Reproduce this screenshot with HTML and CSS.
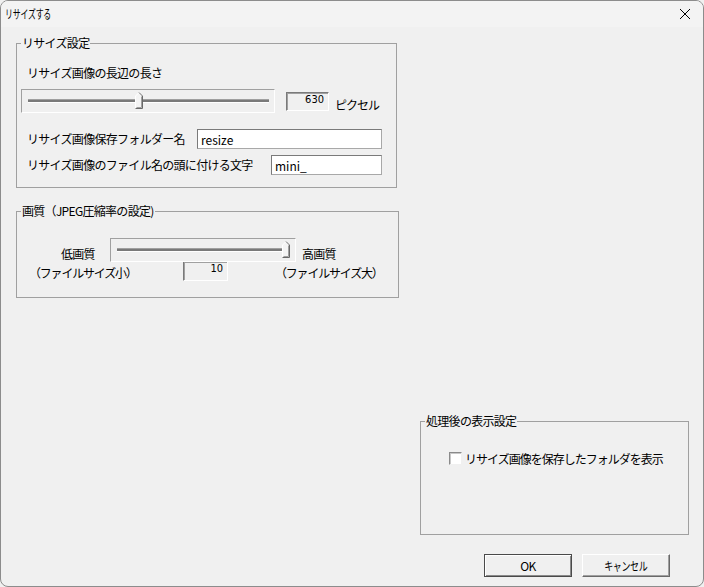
FILE: index.html
```html
<!DOCTYPE html>
<html lang="ja">
<head>
    <meta charset="UTF-8">
    <title>リサイズする</title>
    <link rel="stylesheet" href="styles.css">
</head>
<body>
    <div class="window">
        <div class="titlebar">
            <span class="title">リサイズする</span>
            <svg class="close" width="12" height="12" viewBox="0 0 12 12">
                <path d="M1 1 L11 11 M11 1 L1 11" stroke="#000" stroke-width="1" fill="none"/>
            </svg>
        </div>

        <div class="content">
            <!-- resize settings -->
            <fieldset class="group group-resize">
                <legend>リサイズ設定</legend>
                <div class="head-label">リサイズ画像の長辺の長さ</div>
                <div class="slider-row">
                    <div class="slider slider-long">
                        <div class="track"></div>
                        <svg class="thumb" style="left: 113px;" width="8" height="17" viewBox="0 0 8 17">
                            <path d="M0.5 16.5 V4 L4 0.5 L7.5 4 V16.5 Z" fill="#f4f4f4" stroke="#fff"/>
                            <path d="M4 0.5 L7.5 4 V16.5 H0.5" fill="none" stroke="#696969"/>
                            <path d="M6.5 4.5 V15.5 H1.5" fill="none" stroke="#a0a0a0"/>
                        </svg>
                    </div>
                    <div class="num num-long">630</div>
                    <span class="unit">ピクセル</span>
                </div>
                <div class="field-row first">
                    <label class="lbl-folder">リサイズ画像保存フォルダー名</label>
                    <input class="text in-folder" type="text" value="resize">
                </div>
                <div class="field-row">
                    <label class="lbl-prefix">リサイズ画像のファイル名の頭に付ける文字</label>
                    <input class="text in-prefix" type="text" value="mini_">
                </div>
            </fieldset>

            <!-- jpeg quality -->
            <fieldset class="group group-quality">
                <legend>画質（JPEG圧縮率の設定)</legend>
                <div class="quality-row">
                    <span class="low">低画質</span>
                    <div class="slider slider-quality">
                        <div class="track"></div>
                        <svg class="thumb" style="left: 171px;" width="8" height="17" viewBox="0 0 8 17">
                            <path d="M0.5 16.5 V4 L4 0.5 L7.5 4 V16.5 Z" fill="#f4f4f4" stroke="#fff"/>
                            <path d="M4 0.5 L7.5 4 V16.5 H0.5" fill="none" stroke="#696969"/>
                            <path d="M6.5 4.5 V15.5 H1.5" fill="none" stroke="#a0a0a0"/>
                        </svg>
                    </div>
                    <span class="high">高画質</span>
                </div>
                <div class="size-row">
                    <span class="small">（ファイルサイズ小）</span>
                    <div class="num num-quality">10</div>
                    <span class="large">（ファイルサイズ大）</span>
                </div>
            </fieldset>

            <!-- after processing -->
            <fieldset class="group group-after">
                <legend>処理後の表示設定</legend>
                <label class="check-row">
                    <span class="checkbox"></span>
                    <span class="check-text">リサイズ画像を保存したフォルダを表示</span>
                </label>
            </fieldset>

            <div class="buttons">
                <button class="btn btn-default">OK</button>
                <button class="btn"><span class="btn-narrow">キャンセル</span></button>
            </div>
        </div>
    </div>
</body>
</html>
```

FILE: styles.css
```css
* {
    box-sizing: border-box;
}

body {
    margin: 0;
    background-color: #f0f0f0;
    font-family: "Noto Sans CJK JP", "Noto Sans", sans-serif;
    font-size: 12px;
    line-height: 14px;
    letter-spacing: -0.7px;
    color: #000;
}

.window {
    width: 704px;
    height: 587px;
    border: 1px solid #8c8c8c;
    border-radius: 8px;
    overflow: hidden;
    background-color: #f0f0f0;
}

.titlebar {
    height: 26px;
    background-color: #f3f3f3;
    display: flex;
    align-items: center;
    justify-content: space-between;
    padding: 0 12px 0 4px;
}

.title {
    display: inline-block;
    transform: scaleX(0.66);
    transform-origin: left center;
    letter-spacing: -0.3px;
}

.close {
    display: block;
}

.content {
    padding-left: 15px;
}

/* group boxes */
.group {
    margin: 0;
    border: 1px solid #a0a0a0;
    padding: 0 0 0 4px;
    min-width: 0;
}

.group legend {
    padding: 0 1px;
    line-height: 14px;
}

.group-resize {
    margin-top: 9px;
    width: 381px;
    height: 152px;
}

.group-quality {
    margin-top: 16px;
    width: 383px;
    height: 94px;
}

.group-after {
    margin-top: 116px;
    margin-left: 404px;
    width: 269px;
    height: 121px;
}

.head-label {
    margin-top: 16px;
    margin-left: 6px;
}

/* sliders */
.slider-row {
    display: flex;
    align-items: flex-start;
    margin-top: 9px;
    height: 24px;
}

.slider {
    position: relative;
    height: 24px;
    border: 1px solid;
    border-color: #a0a0a0 #fff #fff #a0a0a0;
}

.slider-long {
    width: 254px;
}

.slider-quality {
    width: 186px;
}

.track {
    position: absolute;
    left: 6px;
    right: 5px;
    top: 9px;
    height: 4px;
    border-top: 1px solid #a0a0a0;
    border-bottom: 1px solid #fff;
    background-color: #7a7a7a;
}

.thumb {
    position: absolute;
    top: 2px;
    display: block;
}

.num {
    height: 19px;
    border: 1px solid;
    border-color: #7a7a7a #fff #fff #7a7a7a;
    box-shadow: inset 1px 1px 0 #a0a0a0;
    text-align: right;
    padding-right: 4px;
    font-family: "DejaVu Sans Condensed", "Liberation Sans", sans-serif;
    font-size: 11px;
    line-height: 14px;
    letter-spacing: 0;
}

.num-long {
    width: 43px;
    margin-top: 3px;
    margin-left: 11px;
}

.unit {
    margin-top: 9px;
    margin-left: 6px;
    letter-spacing: -1px;
}

/* text fields */
.field-row {
    display: flex;
    align-items: center;
    padding-left: 6px;
    margin-top: 6px;
    height: 20px;
}

.field-row.first {
    margin-top: 16px;
}

.lbl-folder {
    width: 170px;
}

.lbl-prefix {
    width: 244px;
}

.text {
    height: 20px;
    border: 1px solid;
    border-color: #7a7a7a #a8a8a8 #a8a8a8 #7a7a7a;
    background-color: #fff;
    font-family: "Noto Sans CJK JP", "Noto Sans", sans-serif;
    font-size: 12px;
    letter-spacing: 0;
    padding: 0 3px;
    margin: 0;
    outline: none;
}

.in-folder {
    width: 185px;
}

.in-prefix {
    width: 111px;
}

/* quality */
.quality-row {
    display: flex;
    align-items: center;
    margin-top: 20px;
    height: 24px;
}

.low {
    margin-left: 40px;
    margin-top: 8px;
    width: 49px;
}

.high {
    margin-left: 6px;
    margin-top: 8px;
}

.size-row {
    display: flex;
    align-items: center;
    margin-top: -1px;
    height: 20px;
}

.small {
    margin-left: 8px;
    width: 154px;
    margin-top: 3px;
    letter-spacing: -1.2px;
}

.num-quality {
    width: 45px;
    height: 20px;
}

.large {
    margin-left: 47px;
    margin-top: 3px;
    letter-spacing: -1.2px;
}

/* checkbox */
.check-row {
    display: flex;
    align-items: center;
    margin-top: 24px;
    margin-left: 24px;
    height: 13px;
}

.checkbox {
    width: 13px;
    height: 13px;
    background-color: #fff;
    border: 1px solid;
    border-color: #8a8a8a #f0f0f0 #f0f0f0 #8a8a8a;
    box-shadow: inset 1px 1px 0 #c8c8c8;
    margin-right: 3px;
}

.check-text {
    letter-spacing: -1px;
}

/* buttons */
.buttons {
    display: flex;
    gap: 10px;
    margin-top: 19px;
    margin-left: 468px;
}

.btn {
    width: 88px;
    height: 23px;
    margin: 0;
    padding: 0;
    background-color: #f0f0f0;
    border: 1px solid;
    border-color: #fff #696969 #696969 #fff;
    box-shadow: inset -1px -1px 0 #a0a0a0;
    font-family: "Noto Sans CJK JP", "Noto Sans", sans-serif;
    font-size: 12px;
    letter-spacing: -0.5px;
    color: #000;
}

.btn-narrow {
    display: inline-block;
    transform: scaleX(0.75);
}

.btn-default {
    border-color: #4a4a4a;
    box-shadow: inset 1px 1px 0 #fff, inset -1px -1px 0 #8a8a8a;
}
```
